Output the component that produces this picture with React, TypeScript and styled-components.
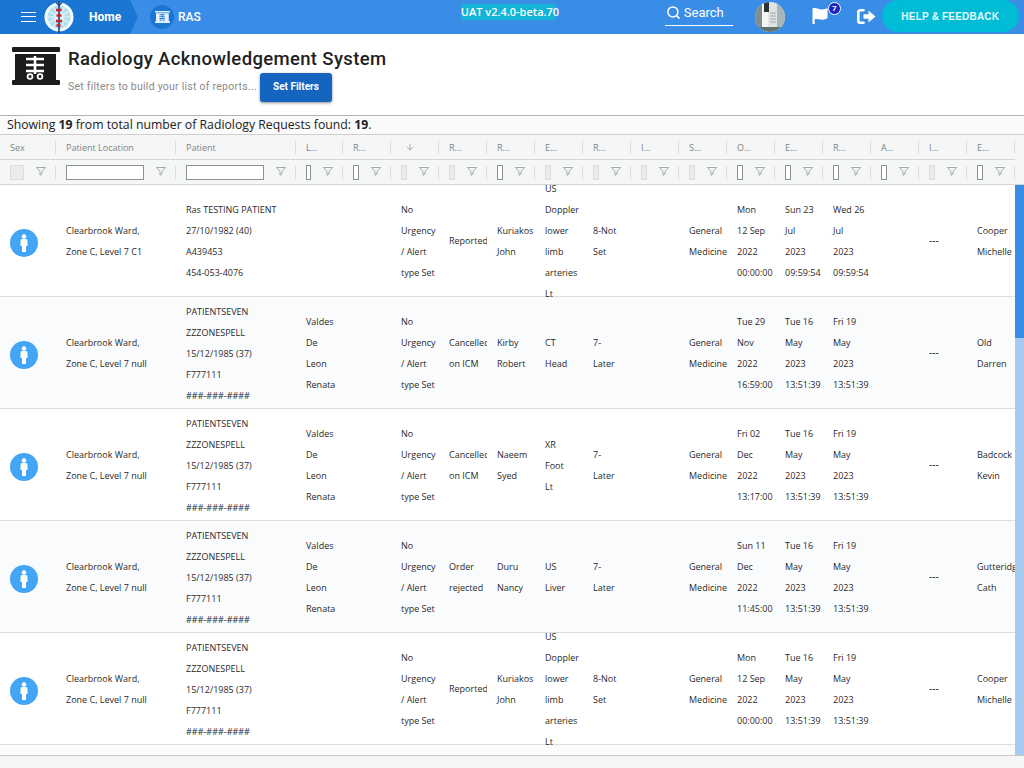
import { ArrowDown, Search } from "lucide-react";
import styled, { createGlobalStyle } from "styled-components";

const GlobalStyle = createGlobalStyle`
    html, body {
        margin: 0;
        padding: 0;
        height: 100%;
        overflow: hidden;
        background: #fff;
    }
    * {
        box-sizing: border-box;
    }
`;

const COLUMN_TEMPLATE = "56px 120px 120px 47px repeat(14, 48px)";

type Column = { label: string; disabled: boolean };

const columns: Column[] = [
    { label: "Sex", disabled: true },
    { label: "Patient Location", disabled: false },
    { label: "Patient", disabled: false },
    { label: "L...", disabled: false },
    { label: "R...", disabled: false },
    { label: "", disabled: true },
    { label: "R...", disabled: true },
    { label: "R...", disabled: false },
    { label: "E...", disabled: true },
    { label: "R...", disabled: true },
    { label: "I...", disabled: true },
    { label: "S...", disabled: true },
    { label: "O...", disabled: false },
    { label: "E...", disabled: false },
    { label: "R...", disabled: false },
    { label: "A...", disabled: false },
    { label: "I...", disabled: true },
    { label: "E...", disabled: false },
];

const sevenPatient = ["PATIENTSEVEN", "ZZZONESPELL", "15/12/1985 (37)", "F777111", "###-###-####"];
const renata = ["Valdes", "De", "Leon", "Renata"];
const noUrgency = ["No", "Urgency", "/ Alert", "type Set"];
const doppler = ["US", "Doppler", "lower", "limb", "arteries", "Lt"];
const general = ["General", "Medicine"];
const tueMay = ["Tue 16", "May", "2023", "13:51:39"];
const friMay = ["Fri 19", "May", "2023", "13:51:39"];

type Row = {
    level: string;
    patient: string[];
    doctor: string[];
    status: string[];
    requester: string[];
    exam: string[];
    priority: string[];
    ordered: string[];
    entered: string[];
    received: string[];
    owner: string[];
};

const rows: Row[] = [
    {
        level: "Zone C, Level 7 C1",
        patient: ["Ras TESTING PATIENT", "27/10/1982 (40)", "A439453", "454-053-4076"],
        doctor: [],
        status: ["Reported"],
        requester: ["Kuriakos", "John"],
        exam: doppler,
        priority: ["8-Not", "Set"],
        ordered: ["Mon", "12 Sep", "2022", "00:00:00"],
        entered: ["Sun 23", "Jul", "2023", "09:59:54"],
        received: ["Wed 26", "Jul", "2023", "09:59:54"],
        owner: ["Cooper", "Michelle"],
    },
    {
        level: "Zone C, Level 7 null",
        patient: sevenPatient,
        doctor: renata,
        status: ["Cancelled", "on ICM"],
        requester: ["Kirby", "Robert"],
        exam: ["CT", "Head"],
        priority: ["7-", "Later"],
        ordered: ["Tue 29", "Nov", "2022", "16:59:00"],
        entered: tueMay,
        received: friMay,
        owner: ["Old", "Darren"],
    },
    {
        level: "Zone C, Level 7 null",
        patient: sevenPatient,
        doctor: renata,
        status: ["Cancelled", "on ICM"],
        requester: ["Naeem", "Syed"],
        exam: ["XR", "Foot", "Lt"],
        priority: ["7-", "Later"],
        ordered: ["Fri 02", "Dec", "2022", "13:17:00"],
        entered: tueMay,
        received: friMay,
        owner: ["Badcock", "Kevin"],
    },
    {
        level: "Zone C, Level 7 null",
        patient: sevenPatient,
        doctor: renata,
        status: ["Order", "rejected"],
        requester: ["Duru", "Nancy"],
        exam: ["US", "Liver"],
        priority: ["7-", "Later"],
        ordered: ["Sun 11", "Dec", "2022", "11:45:00"],
        entered: tueMay,
        received: friMay,
        owner: ["Gutteridge", "Cath"],
    },
    {
        level: "Zone C, Level 7 null",
        patient: sevenPatient,
        doctor: [],
        status: ["Reported"],
        requester: ["Kuriakos", "John"],
        exam: doppler,
        priority: ["8-Not", "Set"],
        ordered: ["Mon", "12 Sep", "2022", "00:00:00"],
        entered: tueMay,
        received: friMay,
        owner: ["Cooper", "Michelle"],
    },
];

const Page = styled.div`
    width: 1024px;
    height: 768px;
    display: flex;
    flex-direction: column;
    overflow: hidden;
    background: #f5f5f5;
    font-family: "Open Sans", sans-serif;
`;

const TopBar = styled.header`
    height: 34px;
    flex: none;
    display: flex;
    align-items: center;
    background: #3a8de6;
    color: #fff;
    font-family: Roboto, sans-serif;
`;

const HomeCrumb = styled.div`
    width: 138px;
    height: 34px;
    flex: none;
    display: flex;
    align-items: center;
    padding-left: 21px;
    background: #1976d2;
    clip-path: polygon(0 0, 130px 0, 138px 17px, 130px 34px, 0 34px);
`;

const Burger = styled.div`
    width: 15px;
    height: 10px;
    margin-right: 8px;
    flex: none;
    border-top: 1px solid #fff;
    border-bottom: 1px solid #fff;
    position: relative;

    &::after {
        content: "";
        position: absolute;
        left: 0;
        right: 0;
        top: 3px;
        height: 1px;
        background: #fff;
    }
`;

const CrumbLabel = styled.span<{ $bold?: boolean }>`
    font-size: 12px;
    font-weight: ${(p) => (p.$bold ? 700 : 500)};
    margin-left: ${(p) => (p.$bold ? "15px" : "4px")};
`;

const RasBadge = styled.div`
    width: 24px;
    height: 24px;
    margin-left: 12px;
    flex: none;
    display: flex;
    align-items: center;
    justify-content: center;
    border-radius: 50%;
    background: #1976d2;
`;

const Version = styled.div`
    margin-left: 260px;
    width: 95px;
    height: 16px;
    margin-top: -10px;
    flex: none;
    font-family: "Open Sans", sans-serif;
    font-size: 11px;
    font-weight: 600;
    line-height: 15px;
    white-space: nowrap;
    text-align: center;
    background: #14b4d6;
`;

const SearchBox = styled.div`
    margin-left: 109px;
    margin-top: -8px;
    width: 68px;
    height: 26px;
    flex: none;
    display: flex;
    align-items: center;
    gap: 3px;
    padding-left: 1px;
    border-bottom: 1px solid #fff;
    font-size: 13px;
`;

const Avatar = styled.div`
    width: 30px;
    height: 30px;
    margin-left: 22px;
    flex: none;
    border-radius: 50%;
    overflow: hidden;
    display: flex;
`;

const FlagWrap = styled.div`
    width: 29px;
    height: 26px;
    margin-left: 27px;
    margin-top: -6px;
    flex: none;
    position: relative;
    display: flex;
    align-items: center;
`;

const CountBadge = styled.span`
    position: absolute;
    left: 16px;
    top: 1px;
    width: 13px;
    height: 13px;
    border-radius: 50%;
    background: #1a23c4;
    border: 1px solid #fff;
    font-size: 8px;
    font-weight: 700;
    line-height: 11px;
    text-align: center;
`;

const LogoutWrap = styled.div`
    width: 19px;
    margin-left: 16px;
    margin-top: -2px;
    flex: none;
    display: flex;
    align-items: center;
`;

const HelpButton = styled.div`
    width: 137px;
    height: 32px;
    margin-left: 6px;
    margin-top: -2px;
    flex: none;
    display: flex;
    align-items: center;
    justify-content: center;
    border-radius: 16px;
    background: #00bcd4;
    font-family: "Liberation Sans", Arial, sans-serif;
    font-size: 10px;
    font-weight: 700;
    letter-spacing: 0.2px;
    color: #e6f8fb;
`;

const TitleArea = styled.section`
    height: 82px;
    flex: none;
    display: flex;
    padding: 13px 12px 0;
    background: #fff;
    border-bottom: 1px solid #b4b4b4;
    font-family: Roboto, sans-serif;
`;

const TitleIcon = styled.div`
    height: 38px;
    flex: none;
`;

const TitleText = styled.div`
    margin-left: 8px;
`;

const Title = styled.h1`
    margin: 0;
    font-size: 18.5px;
    line-height: 24px;
    font-weight: 500;
    letter-spacing: 0.35px;
    color: #212121;
`;

const TitleActions = styled.div`
    display: flex;
    align-items: center;
    margin-top: 2px;
`;

const Hint = styled.span`
    margin-top: -2px;
    font-size: 10.5px;
    letter-spacing: 0.25px;
    color: #8a8a8a;
`;

const FilterButton = styled.button`
    width: 72px;
    height: 29px;
    margin-left: 3px;
    padding: 0 0 2px;
    border: 0;
    border-radius: 3px;
    background: #1565c0;
    color: #fff;
    font-family: Roboto, sans-serif;
    font-size: 10px;
    font-weight: 700;
    box-shadow: 0 1px 3px rgba(0, 0, 0, 0.45);
`;

const Summary = styled.div`
    height: 19px;
    flex: none;
    padding-left: 7px;
    background: #fafafa;
    border-bottom: 1px solid #cfcfcf;
    font-size: 12.25px;
    line-height: 18px;
    color: #222;

    b {
        font-weight: 700;
    }
`;

const GridHead = styled.div`
    height: 50px;
    flex: none;
    background: #f5f6f6;
    border-bottom: 1px solid #d4d6d6;
`;

const HeadRow = styled.div<{ $filter?: boolean }>`
    display: grid;
    grid-template-columns: ${COLUMN_TEMPLATE};
    width: 1015px;
    height: ${(p) => (p.$filter ? "24px" : "25px")};
    border-bottom: ${(p) => (p.$filter ? "0" : "1px solid #d4d6d6")};
    align-items: center;
`;

const HeadCell = styled.div`
    height: 13px;
    padding-left: 10px;
    border-right: 1px solid #dcdede;
    font-size: 9px;
    line-height: 13px;
    color: #808585;
    white-space: nowrap;
`;

const SortCell = styled(HeadCell)`
    padding-left: 14px;
    display: flex;
    align-items: center;
`;

const FilterCell = styled.div`
    height: 13px;
    padding-left: 10px;
    border-right: 1px solid #dcdede;
    display: flex;
    align-items: center;
    justify-content: space-between;
    padding-right: 9px;
`;

const FilterInput = styled.div<{ $disabled: boolean }>`
    flex: 1;
    max-width: 78px;
    height: 15px;
    margin-right: 12px;
    background: ${(p) => (p.$disabled ? "#ebebeb" : "#fff")};
    border: 1px solid ${(p) => (p.$disabled ? "#dcdcdc" : "#8b9192")};
`;

const Funnel = () => (
    <svg width="10" height="9" viewBox="0 0 10 9" style={{ flex: "none", marginBottom: 2 }}>
        <path d="M0.5 0.5h9L6 4.5v2.5L4 8.2V4.5z" fill="none" stroke="#9aa0a0" strokeWidth="0.9" />
    </svg>
);

const GridBody = styled.div`
    height: 571px;
    flex: none;
    display: flex;
    background: #f9fbfd;
    border-bottom: 1px solid #c8c8c8;
    overflow: hidden;
`;

const RowList = styled.div`
    width: 1015px;
    flex: none;
    overflow: hidden;
`;

const Scrollbar = styled.div`
    flex: 1;
    background: #a6caf0;
`;

const ScrollThumb = styled.div`
    height: 153px;
    background: #3a8de6;
`;

const DataRow = styled.div<{ $striped: boolean }>`
    display: grid;
    grid-template-columns: ${COLUMN_TEMPLATE};
    width: 1015px;
    height: 112px;
    background: ${(p) => (p.$striped ? "#f9fbfd" : "#fff")};
    border-bottom: 1px solid #dcdede;
`;

const Cell = styled.div<{ $single?: boolean }>`
    height: 112px;
    padding-left: 10px;
    padding-bottom: ${(p) => (p.$single ? "1px" : "0")};
    display: flex;
    flex-direction: column;
    justify-content: center;
    overflow: hidden;
    font-size: 9px;
    line-height: 21px;
    color: #2a2a2a;
    white-space: nowrap;
`;

const SexCell = styled(Cell)`
    padding-top: 3px;
`;

const Dash = styled.span`
    font-size: 10px;
    color: #111;
`;

const SexIcon = () => (
    <svg width="28" height="28" viewBox="0 0 28 28">
        <circle cx="14" cy="14" r="14" fill="#42a5f5" />
        <circle cx="14" cy="7.5" r="2.2" fill="#fff" />
        <path d="M10.5 11.5a1.5 1.5 0 0 1 1.5-1.5h4a1.5 1.5 0 0 1 1.5 1.5v5.5h-1.5v6h-4v-6h-1.5z" fill="#fff" />
    </svg>
);

const Lines = ({ items }: { items: string[] }) => (
    <Cell $single={items.length === 1}>
        {items.map((text, i) => (
            <div key={i}>{text}</div>
        ))}
    </Cell>
);

const spokes = [0, 30, 60, 90, 120, 150];

const HospitalLogo = () => (
    <svg width="30" height="32" viewBox="0 0 30 32" style={{ flex: "none" }}>
        <circle cx="15" cy="16" r="14.5" fill="#f1fafc" />
        <circle cx="15" cy="16" r="11.5" fill="#b4dfec" />
        {spokes.map((deg) => (
            <path
                key={deg}
                d="M15 5v22"
                stroke="#e6f5f9"
                strokeWidth="1"
                transform={`rotate(${deg} 15 16)`}
            />
        ))}
        <circle cx="15" cy="16" r="5" fill="#e4f3f7" />
        <path d="M15 0v32" stroke="#1d3f78" strokeWidth="1.6" />
        <path d="M12 9h5.500M12.500 14.500h5M12 20h6M12.500 24.500h4" stroke="#c8242c" strokeWidth="2.600" />
        <path d="M12 1.500l3 3 3-3" fill="none" stroke="#1d3f78" strokeWidth="1.200" />
    </svg>
);

const RasIcon = ({ width, ink, paper }: { width: number; ink: string; paper: string }) => (
    <svg width={width} height={(width * 38) / 48} viewBox="0 0 48 38" style={{ display: "block", flex: "none" }}>
        <rect x="0" y="0" width="48" height="5" rx="1" fill={ink} />
        <rect x="3" y="7" width="41" height="28" fill={ink} />
        <rect x="0" y="33" width="48" height="5" rx="1" fill={ink} />
        <path d="M23 9v18M14 12h18M14 18h18M14 24h18" stroke={paper} strokeWidth="2.600" fill="none" />
        <circle cx="18" cy="29.500" r="2.400" fill="none" stroke={paper} strokeWidth="1.800" />
        <circle cx="28" cy="29.500" r="2.400" fill="none" stroke={paper} strokeWidth="1.800" />
    </svg>
);

const AvatarPhoto = () => (
    <svg width="30" height="30" viewBox="0 0 30 30">
        <rect width="30" height="30" fill="#dfe3e3" />
        <rect width="7" height="30" fill="#7f8e8a" />
        <rect x="22" width="8" height="30" fill="#aab5b5" />
        <rect x="7" y="0" width="6" height="30" fill="#f3f5f5" />
        <rect x="9" y="0" width="5" height="10" fill="#2b3431" />
        <path d="M15 11h6M15 14h6M15 17h6M15 20h6" stroke="#9aa5a5" strokeWidth="1" />
        <rect x="3" y="25" width="24" height="5" fill="#5f7470" />
    </svg>
);

const FlagIcon = () => (
    <svg width="16" height="17" viewBox="0 0 16 17" style={{ marginTop: 3 }}>
        <path
            d="M0.500 1.500C4 0 6.500 2.500 10 2.500c2 0 4-.8 5.500-1.500v10c-2 1.500-4 2-6.500 1.500-2.500-.5-4.500-1-6.300-.2V17H.5z"
            fill="#fff"
        />
    </svg>
);

const LogoutIcon = () => (
    <svg width="19" height="15" viewBox="0 0 19 15">
        <path d="M6.500 1.300H3A1.700 1.700 0 0 0 1.300 3v9A1.700 1.700 0 0 0 3 13.700h3.500" fill="none" stroke="#fff" strokeWidth="2.600" strokeLinecap="round" />
        <path d="M11.500 1.500L18.500 7.500l-7 6v-3.800H6.500V5.300h5z" fill="#fff" />
    </svg>
);

export default function App() {
    return (
        <Page>
            <GlobalStyle />
            <TopBar>
                <HomeCrumb>
                    <Burger />
                    <HospitalLogo />
                    <CrumbLabel $bold>Home</CrumbLabel>
                </HomeCrumb>
                <RasBadge>
                    <RasIcon width={15} ink="#e8f1fb" paper="#1976d2" />
                </RasBadge>
                <CrumbLabel>RAS</CrumbLabel>
                <Version>UAT v2.4.0-beta.70</Version>
                <SearchBox>
                    <Search size={15} strokeWidth={2.4} />
                    Search
                </SearchBox>
                <Avatar>
                    <AvatarPhoto />
                </Avatar>
                <FlagWrap>
                    <FlagIcon />
                    <CountBadge>7</CountBadge>
                </FlagWrap>
                <LogoutWrap>
                    <LogoutIcon />
                </LogoutWrap>
                <HelpButton>HELP &amp; FEEDBACK</HelpButton>
            </TopBar>

            <TitleArea>
                <TitleIcon>
                    <RasIcon width={48} ink="#1c1c1c" paper="#fff" />
                </TitleIcon>
                <TitleText>
                    <Title>Radiology Acknowledgement System</Title>
                    <TitleActions>
                        <Hint>Set filters to build your list of reports...</Hint>
                        <FilterButton>Set Filters</FilterButton>
                    </TitleActions>
                </TitleText>
            </TitleArea>

            <Summary>
                Showing <b>19</b> from total number of Radiology Requests found: <b>19</b>.
            </Summary>

            <GridHead>
                <HeadRow>
                    {columns.map((col, i) =>
                        col.label ? (
                            <HeadCell key={i}>{col.label}</HeadCell>
                        ) : (
                            <SortCell key={i}>
                                <ArrowDown size={10} strokeWidth={1.4} />
                            </SortCell>
                        )
                    )}
                </HeadRow>
                <HeadRow $filter>
                    {columns.map((col, i) => (
                        <FilterCell key={i}>
                            <FilterInput $disabled={col.disabled} />
                            <Funnel />
                        </FilterCell>
                    ))}
                </HeadRow>
            </GridHead>

            <GridBody>
                <RowList>
                    {rows.map((row, i) => (
                        <DataRow key={i} $striped={i % 2 === 1}>
                            <SexCell>
                                <SexIcon />
                            </SexCell>
                            <Lines items={["Clearbrook Ward,", row.level]} />
                            <Lines items={row.patient} />
                            <Lines items={row.doctor} />
                            <Lines items={[]} />
                            <Lines items={noUrgency} />
                            <Lines items={row.status} />
                            <Lines items={row.requester} />
                            <Lines items={row.exam} />
                            <Lines items={row.priority} />
                            <Lines items={[]} />
                            <Lines items={general} />
                            <Lines items={row.ordered} />
                            <Lines items={row.entered} />
                            <Lines items={row.received} />
                            <Lines items={[]} />
                            <Cell $single>
                                <Dash>---</Dash>
                            </Cell>
                            <Lines items={row.owner} />
                        </DataRow>
                    ))}
                </RowList>
                <Scrollbar>
                    <ScrollThumb />
                </Scrollbar>
            </GridBody>
        </Page>
    );
}
